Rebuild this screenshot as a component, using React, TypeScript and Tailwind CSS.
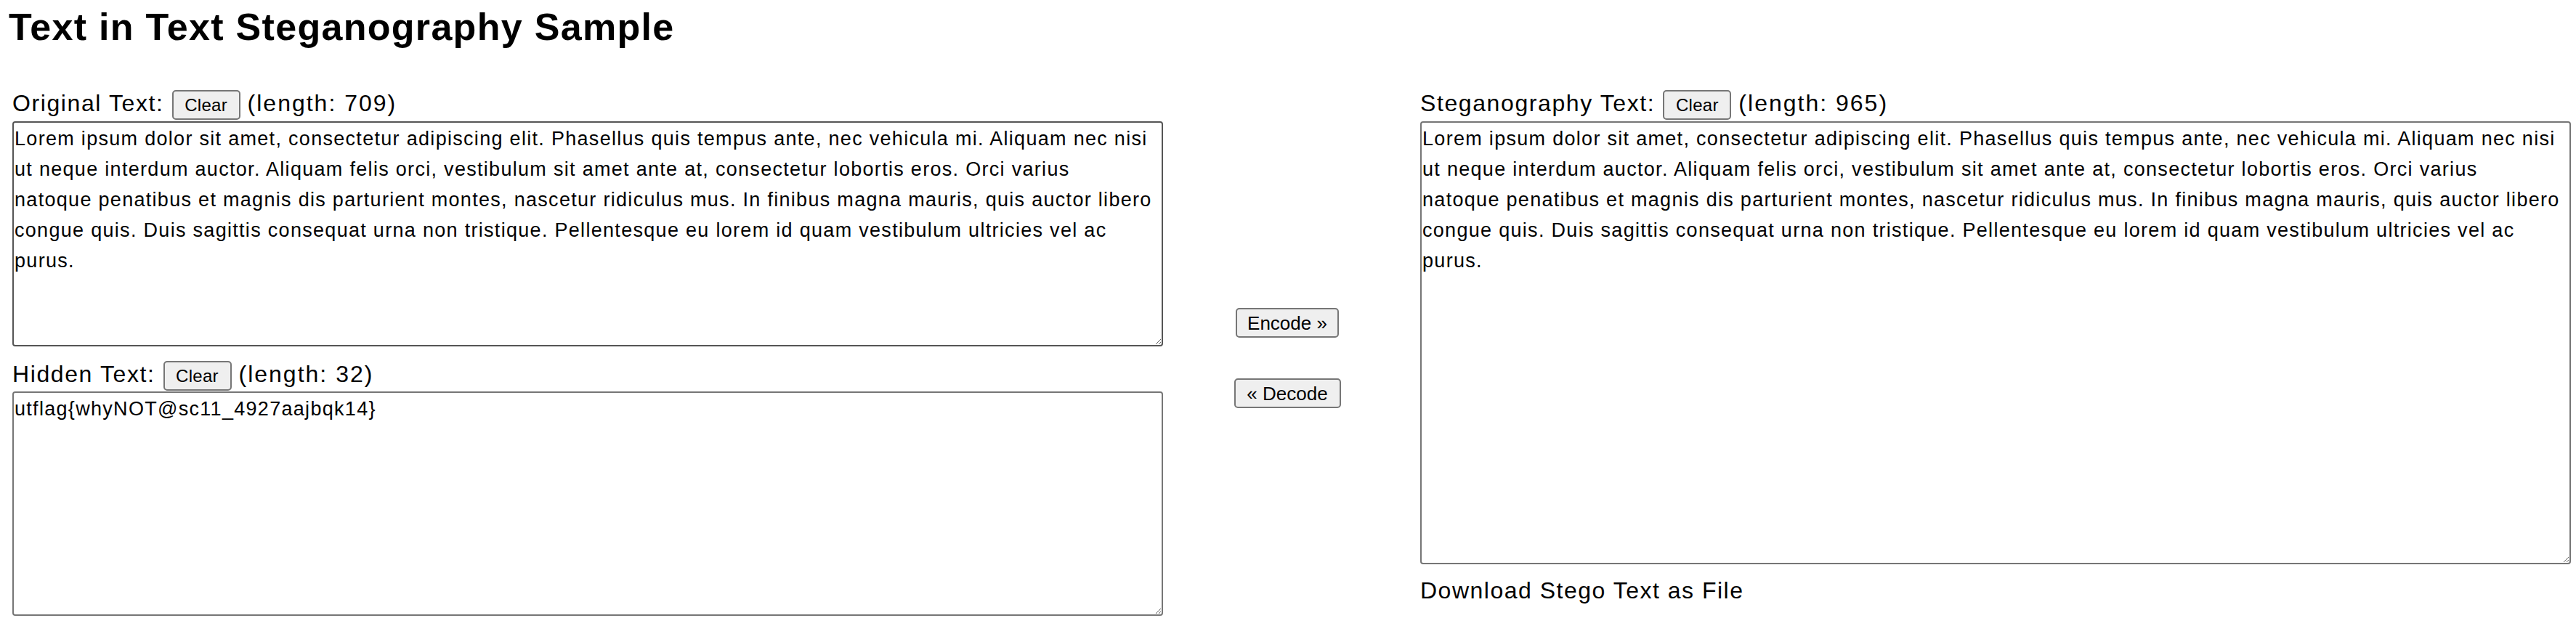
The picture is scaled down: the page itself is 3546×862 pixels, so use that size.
import React, { useState } from "react";

const ORIGINAL = [
  "Lorem ipsum dolor sit amet, consectetur adipiscing elit. Phasellus quis tempus ante, nec vehicula mi. Aliquam nec nisi",
  "ut neque interdum auctor. Aliquam felis orci, vestibulum sit amet ante at, consectetur lobortis eros. Orci varius",
  "natoque penatibus et magnis dis parturient montes, nascetur ridiculus mus. In finibus magna mauris, quis auctor libero",
  "congue quis. Duis sagittis consequat urna non tristique. Pellentesque eu lorem id quam vestibulum ultricies vel ac",
  "purus.",
].join("\n");

const HIDDEN = "utflag{whyNOT@sc11_4927aajbqk14}";

const font = { fontFamily: '"Liberation Sans", Arial, sans-serif' };

const taBase =
  "w-full border-2 rounded-[4px] pt-[1px] px-[1px] text-[27px] leading-[42px] tracking-[1.3px] text-black outline-none";

function ClearButton({ onClick }: { onClick: () => void }) {
  return (
    <button
      onClick={onClick}
      className="w-[94px] h-[41px] flex items-center justify-center bg-[#efefef] border-2 border-[#767676] rounded-[5px] text-[24px] leading-[27px] tracking-[0.3px] text-black"
    >
      Clear
    </button>
  );
}

function LabelRow({
  label,
  count,
  onClear,
  className,
}: {
  label: string;
  count: number;
  onClear: () => void;
  className: string;
}) {
  return (
    <div className={"flex items-start text-[32px] leading-[37px] " + className}>
      <span className="tracking-[1.6px]">{label}</span>
      <span className="ml-[11px]">
        <ClearButton onClick={onClear} />
      </span>
      <span className="ml-[10px] tracking-[2px]">(length: {count})</span>
    </div>
  );
}

export default function App() {
  const [orig, setOrig] = useState(ORIGINAL);
  const [hidden, setHidden] = useState(HIDDEN);
  const [stego, setStego] = useState(ORIGINAL);

  return (
    <div className="w-[3546px] min-h-[862px] bg-white text-black" style={font}>
      <h1 className="pt-[7px] pl-[12px] text-[52px] leading-[60px] font-bold tracking-[1.3px]">
        Text in Text Steganography Sample
      </h1>

      <div className="flex items-start pl-[17px] mt-[57px]">
        {/* Left column */}
        <div className="w-[1584px] flex flex-col">
          <LabelRow
            label="Original Text:"
            count={orig ? 709 : 0}
            onClear={() => setOrig("")}
            className="h-[43px]"
          />
          <textarea
            value={orig}
            onChange={(e) => setOrig(e.target.value)}
            className={taBase + " h-[310px] border-[#555555]"}
            style={font}
          />

          <LabelRow
            label="Hidden Text:"
            count={hidden.length}
            onClear={() => setHidden("")}
            className="h-[42px] mt-[20px]"
          />
          <textarea
            value={hidden}
            onChange={(e) => setHidden(e.target.value)}
            className={taBase + " h-[309px] border-[#767676]"}
            style={font}
          />
        </div>

        {/* Middle column */}
        <div className="w-[354px] flex flex-col items-center pt-[300px] pr-[12px]">
          <button className="w-[142px] h-[41px] flex items-center justify-center bg-[#efefef] border-2 border-[#767676] rounded-[5px] text-[26px] leading-[30px] text-black">
            Encode »
          </button>
          <button className="w-[147px] h-[41px] mt-[56px] flex items-center justify-center bg-[#efefef] border-2 border-[#767676] rounded-[5px] text-[26px] leading-[30px] text-black">
            « Decode
          </button>
        </div>

        {/* Right column */}
        <div className="w-[1584px] flex flex-col">
          <LabelRow
            label="Steganography Text:"
            count={stego ? 965 : 0}
            onClear={() => setStego("")}
            className="h-[43px]"
          />
          <textarea
            value={stego}
            onChange={(e) => setStego(e.target.value)}
            className={taBase + " h-[610px] border-[#767676]"}
            style={font}
          />
          <div className="mt-[18px] text-[32px] leading-[37px] tracking-[1.5px]">
            Download Stego Text as File
          </div>
        </div>
      </div>
    </div>
  );
}
